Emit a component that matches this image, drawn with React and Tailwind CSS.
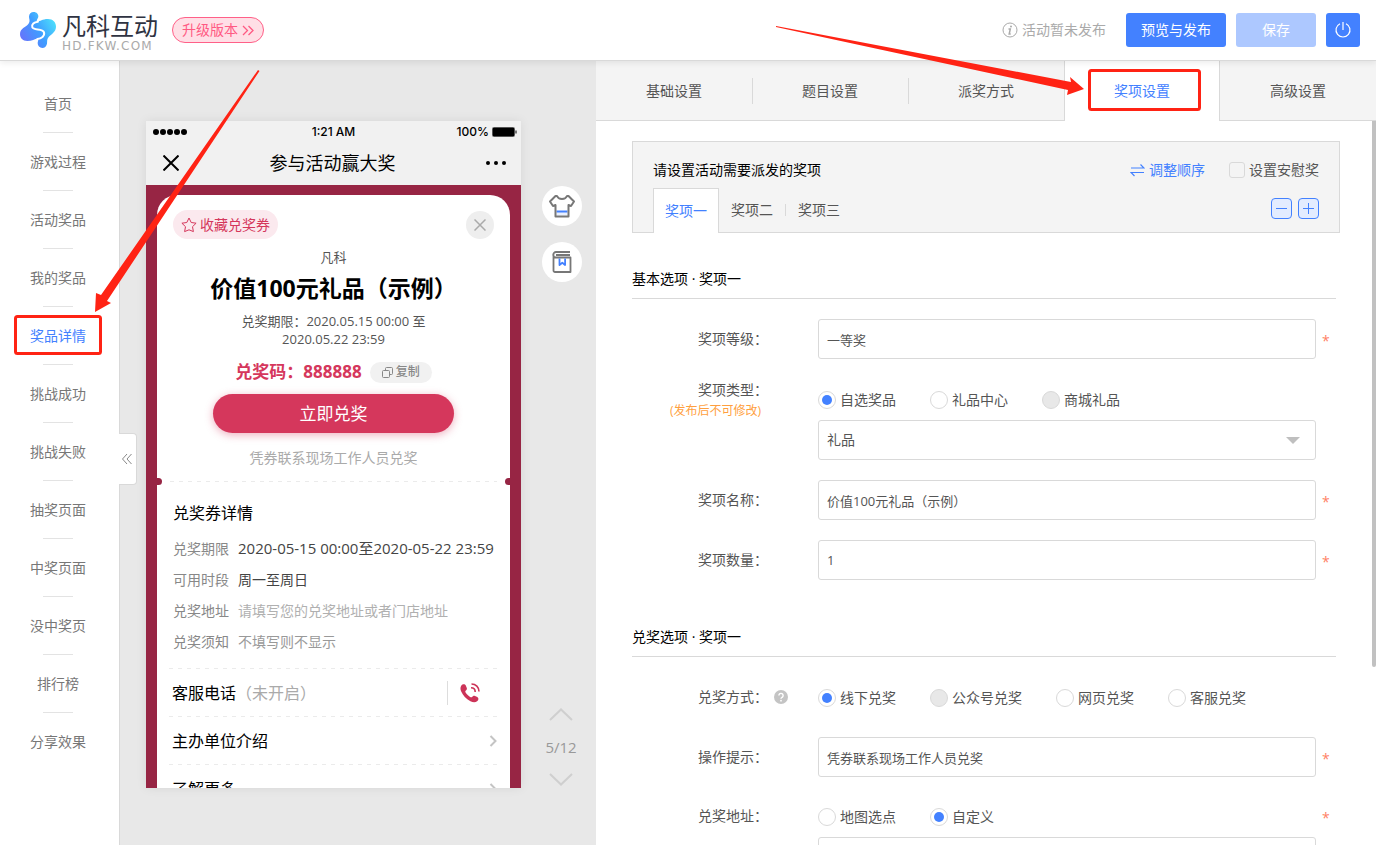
import { useState } from "react";

const pages = [
  "首页",
  "游戏过程",
  "活动奖品",
  "我的奖品",
  "奖品详情",
  "挑战成功",
  "挑战失败",
  "抽奖页面",
  "中奖页面",
  "没中奖页",
  "排行榜",
  "分享效果",
];

const tabs = ["基础设置", "题目设置", "派奖方式", "奖项设置", "高级设置"];

const couponRows = [
  { label: "兑奖期限", value: "2020-05-15 00:00至2020-05-22 23:59", style: "text-[15px] text-[#444444]" },
  { label: "可用时段", value: "周一至周日", style: "text-[#444444]" },
  { label: "兑奖地址", value: "请填写您的兑奖地址或者门店地址", style: "text-[#b0b0b0]" },
  { label: "兑奖须知", value: "不填写则不显示", style: "text-[#999999]" },
];

const inputClass =
  "block h-10 w-full appearance-none rounded-[3px] border border-[#d9d9d9] bg-white px-2 text-[#555555] outline-none focus:border-[#4381ff]";

function Logo() {
  return (
    <a href="#" aria-label="凡科互动" className="flex items-center gap-[6px]">
      <svg className="h-9 w-9" viewBox="0 0 108 108">
        <defs>
          <linearGradient id="logoFill" x1="0" y1="0.8" x2="1" y2="0.2">
            <stop offset="0" stopColor="#6b6ffb" />
            <stop offset="0.5" stopColor="#3f9dff" />
            <stop offset="1" stopColor="#4ee6fb" />
          </linearGradient>
        </defs>
        <path
          fill="url(#logoFill)"
          d="M41 0C50 0 56 7 55 14C54 19 50 22 50 28C60 30 64 21 84 21C99 21 108 31 108 44C108 60 94 66 86 75C80 82 82 88 81 95C79 103 74 108 67 108C59 108 53 102 53 94C53 88 56 85 54 80C44 80 36 87 22 87C8 87 0 78 0 66C0 48 20 46 27 33C31 25 27 20 27 14C27 6 33 0 41 0Z"
        />
        <path
          fill="none"
          stroke="#fff"
          strokeWidth="6"
          strokeLinecap="round"
          d="M54 29C42 30 34 37 37 46C40 56 68 49 72 61C75 72 64 80 52 81"
        />
      </svg>
      <span className="flex flex-col pt-1 text-[#2f3342]">
        <span className="text-2xl leading-7">凡科互动</span>
        <span className="font-['DejaVu_Sans'] text-xs leading-3 tracking-widest text-[#aaaaaa]">HD.FKW.COM</span>
      </span>
    </a>
  );
}

function Header() {
  return (
    <header className="relative z-10 flex h-[61px] shrink-0 items-center border-b border-[#d9d9d9] bg-white pr-4 pl-5 shadow-[0_2px_6px_rgba(0,0,0,0.08)]">
      <Logo />
      <button
        type="button"
        className="ml-[14px] flex h-[26px] items-center gap-1 rounded-full border border-[#ff6088] bg-[#ffdfe6] px-[9px] text-sm text-[#ff5a83]"
      >
        升级版本
        <svg className="h-[11px] w-3" viewBox="0 0 12 11" fill="none" stroke="currentColor" strokeWidth="1.300">
          <path d="M1 1l4.500 4.500L1 10M6.500 1l4.500 4.500L6.500 10" />
        </svg>
      </button>

      <div className="ml-auto flex items-center gap-[10px] text-sm">
        <span className="mr-[10px] flex items-center gap-1 text-[#aaaaaa]">
          <svg className="h-4 w-4" viewBox="0 0 16 16" fill="none" stroke="currentColor">
            <circle cx="8" cy="8" r="7" />
            <circle cx="9" cy="4.500" r="1" fill="currentColor" stroke="none" />
            <path strokeWidth="1.500" d="M6.500 7h1.800L7.200 12h1.500" />
          </svg>
          活动暂未发布
        </span>
        <button type="button" className="h-[34px] w-[100px] rounded-[3px] bg-[#4381ff] text-white">
          预览与发布
        </button>
        <button type="button" className="h-[34px] w-20 rounded-[3px] bg-[#adc8ff] text-white">
          保存
        </button>
        <button
          type="button"
          aria-label="退出"
          className="flex h-[34px] w-[34px] items-center justify-center rounded-[3px] bg-[#4381ff] text-white"
        >
          <svg className="h-[18px] w-[18px]" viewBox="0 0 18 18" fill="none" stroke="currentColor" strokeWidth="1.200">
            <path d="M9 1v8M6 2.700a7 7 0 1 0 6 0" />
          </svg>
        </button>
      </div>
    </header>
  );
}

function Sidebar({ page, onChange }) {
  return (
    <nav className="relative z-[5] w-[120px] shrink-0 border-r border-[#d9d9d9] bg-white pt-[14px]">
      <ul>
        {pages.map((name, i) => (
          <li key={name} className="flex flex-col items-center pr-[3px]">
            <button
              type="button"
              onClick={() => onChange(name)}
              className={`h-[57px] text-sm ${name === page ? "text-[#4381ff]" : "text-[#777777]"}`}
            >
              {name}
            </button>
            <span className={`h-px w-[30px] ${i < pages.length - 1 ? "bg-[#e3e3e3]" : "bg-transparent"}`} />
          </li>
        ))}
      </ul>
      <button
        type="button"
        aria-label="收起"
        className="absolute top-[372px] left-full flex h-[52px] w-[18px] items-center rounded-r-[4px] border border-l-0 border-[#d9d9d9] bg-white pl-[2px] text-[#888888]"
      >
        <svg className="h-3 w-3" viewBox="0 0 12 12" fill="none" stroke="currentColor">
          <path d="M6 1L1.500 6L6 11M10.500 1L6 6l4.500 5" />
        </svg>
      </button>
    </nav>
  );
}

function DashedLine() {
  return <div className="h-px flex-1 bg-[repeating-linear-gradient(90deg,#ebebeb_0_4px,transparent_4px_9px)]" />;
}

function ChevronRight() {
  return (
    <svg className="h-3 w-2" viewBox="0 0 8 12" fill="none" stroke="#c4c4c4" strokeWidth="2">
      <path d="M1.500 1l5 5l-5 5" />
    </svg>
  );
}

function Phone() {
  return (
    <div className="flex h-[667px] w-[375px] shrink-0 flex-col overflow-hidden bg-[#972544] shadow-[0_0_10px_rgba(0,0,0,0.08)]">
      <div className="shrink-0 bg-[#f1f1f1] text-black">
        {/* Status bar */}
        <div className="grid h-[21px] grid-cols-3 items-center px-1 font-['Inter'] text-xs font-medium">
          <svg className="ml-[3px] h-[6px] w-[34px]" viewBox="0 0 34 6">
            <circle cx="3" cy="3" r="3" />
            <circle cx="10" cy="3" r="3" />
            <circle cx="17" cy="3" r="3" />
            <circle cx="24" cy="3" r="3" />
            <circle cx="31" cy="3" r="3" />
          </svg>
          <span className="text-center">1:21 AM</span>
          <span className="flex items-center justify-end gap-[3px]">
            100%
            <svg className="h-[10px] w-[25px]" viewBox="0 0 25 10">
              <rect x="0.500" y="0.500" width="22" height="9" rx="1" fill="none" stroke="#555" />
              <rect x="1" y="1" width="21" height="8" />
              <path d="M23.500 3.500h1v3h-1z" />
            </svg>
          </span>
        </div>
        <div className="flex h-[43px] items-center justify-between pr-[15px] pb-px pl-[17px]">
          <svg className="h-4 w-4" viewBox="0 0 16 16" stroke="#000" strokeWidth="2">
            <path d="M0.500 0.500l15 15M15.500 0.500l-15 15" />
          </svg>
          <span className="text-lg">参与活动赢大奖</span>
          <svg className="h-1 w-5" viewBox="0 0 20 4">
            <circle cx="2" cy="2" r="2" />
            <circle cx="10" cy="2" r="2" />
            <circle cx="18" cy="2" r="2" />
          </svg>
        </div>
      </div>

      {/* Coupon */}
      <div className="mx-[11px] mt-[10px] flex shrink-0 flex-col items-center rounded-t-[20px] bg-white pt-[15px]">
        <div className="flex w-full items-center justify-between px-4">
          <button
            type="button"
            className="flex h-[29px] items-center gap-[3px] rounded-full bg-[#fbe9ee] px-2 text-sm text-[#d5375c]"
          >
            <svg className="h-4 w-4" viewBox="0 0 16 16" fill="none" stroke="currentColor" strokeLinejoin="round">
              <path d="M8 1l2.200 4.500l4.900.7l-3.600 3.500l.9 4.900L8 12.800L3.600 14.600l.9-4.900L.9 6.200l4.900-.7z" />
            </svg>
            收藏兑奖券
          </button>
          <button
            type="button"
            aria-label="关闭"
            className="flex h-7 w-7 items-center justify-center rounded-full bg-[#eeeeee]"
          >
            <svg className="h-3 w-3" viewBox="0 0 12 12" stroke="#aaa" strokeWidth="1.500">
              <path d="M0.500 0.500l11 11M11.500 0.500l-11 11" />
            </svg>
          </button>
        </div>

        <p className="mt-2 text-[13px] leading-5 text-[#555555]">凡科</p>
        <h1 className="mt-[5px] text-[23px] leading-8 font-bold text-black">价值100元礼品（示例）</h1>
        <p className="mt-2 text-center text-[13px] leading-[18px] text-[#555555]">
          兑奖期限：2020.05.15 00:00 至
          <br />
          2020.05.22 23:59
        </p>

        <div className="mt-[13px] flex h-[22px] items-center gap-2">
          <span className="text-[17px] font-bold text-[#d5375c]">兑奖码：888888</span>
          <button
            type="button"
            className="flex h-[21px] items-center gap-[3px] rounded-full bg-[#f1f1f1] px-3 text-xs font-medium text-[#888888]"
          >
            <svg className="h-[11px] w-[11px]" viewBox="0 0 11 11" fill="none" stroke="currentColor">
              <rect x="0.500" y="3.500" width="7" height="7" rx="1" />
              <path d="M3.500 3.500v-2a1 1 0 0 1 1-1h5a1 1 0 0 1 1 1v5a1 1 0 0 1-1 1h-2" />
            </svg>
            复制
          </button>
        </div>
        <button
          type="button"
          className="mt-[11px] h-[39px] w-[241px] rounded-full bg-[#d5375c] text-[17px] text-white shadow-[0_2px_8px_rgba(213,55,92,0.4)]"
        >
          立即兑奖
        </button>
        <p className="mt-[15px] text-sm leading-5 text-[#aaaaaa]">凭券联系现场工作人员兑奖</p>

        <div className="mt-[10px] flex w-full items-center">
          <span className="h-[7px] w-[5px] rounded-r-full bg-[#972544]" />
          <span className="w-2" />
          <DashedLine />
          <span className="w-2" />
          <span className="h-[7px] w-[5px] rounded-l-full bg-[#972544]" />
        </div>

        <div className="w-full px-4 pt-4">
          <h2 className="mb-2 text-base leading-6 text-black">兑奖券详情</h2>
          <dl>
            {couponRows.map((row) => (
              <div key={row.label} className="flex h-[31px] items-center gap-[9px] text-sm whitespace-nowrap">
                <dt className="text-[#888888]">{row.label}</dt>
                <dd className={row.style}>{row.value}</dd>
              </div>
            ))}
          </dl>
        </div>

        <div className="mt-[11px] w-full px-3 text-base text-black">
          <DashedLine />
          <div className="flex h-[47px] items-center justify-between pr-[18px] pl-[3px]">
            <span>
              客服电话<span className="text-[#aaaaaa]">（未开启）</span>
            </span>
            <a href="#" aria-label="拨打电话" className="flex h-6 items-center border-l border-[#dddddd] pl-3">
              <svg className="h-5 w-5" viewBox="0 0 20 20" fill="#cc3358">
                <path d="M1.200 2.700C2.700.8 5 .9 5.800 2.600l1 2.300c.5 1.400-.3 2-1.200 2.800c-.5.6-.3 1.200.2 2c1.100 1.700 2.600 3.200 4.300 4.200c.9.500 1.500.6 2 .1c.8-.9 1.500-1.700 2.900-1.100l2.300 1.100c1.600 1 1.500 3-.2 4.300c-1.700 1.300-4 1.300-6.700-.1C6 15.900 2.900 12.400 1.200 8.500C.3 6.300.2 4.300 1.200 2.700z" />
                <path d="M11.500 1c4.300 0 7.500 3.200 7.500 7.500M11 4.700c2.500 0 4.200 1.700 4.200 4.200" fill="none" stroke="#cc3358" strokeWidth="1.600" />
              </svg>
            </a>
          </div>
          <DashedLine />
          <div className="flex h-[47px] items-center justify-between pr-px pl-[3px]">
            主办单位介绍
            <ChevronRight />
          </div>
          <DashedLine />
          <div className="flex h-[47px] items-center justify-between pr-px pl-[3px]">
            了解更多
            <ChevronRight />
          </div>
        </div>
      </div>
    </div>
  );
}

function Preview() {
  return (
    <section className="flex w-[476px] shrink-0 gap-[21px] bg-[#e8e8e8] pt-[60px] pl-[26px]">
      <Phone />
      <div className="flex h-[667px] w-10 flex-col items-center gap-4 pt-[65px]">
        <button type="button" aria-label="皮肤" className="flex h-10 w-10 items-center justify-center rounded-full bg-white">
          <svg className="h-6 w-7" viewBox="0 0 28 24" fill="none" stroke="#777" strokeWidth="2" strokeLinejoin="round">
            <path d="M8.500 18h11v3.500h-11z" fill="#e9f0ff" stroke="none" />
            <path d="M8.500 17.500h11" stroke="#4381ff" />
            <path d="M9 2L7.500 2L2 7.500l3 4.500l2.500-1V22.500h13V11l2.500 1l3-4.500L20.500 2H19c-.8 2-2.500 3-5 3s-4.200-1-5-3z" />
          </svg>
        </button>
        <button type="button" aria-label="模板" className="flex h-10 w-10 items-center justify-center rounded-full bg-white">
          <svg className="h-6 w-5" viewBox="0 0 20 24" fill="none" stroke="#777" strokeWidth="1.800" strokeLinejoin="round">
            <path d="M18 2H4a2.500 2.500 0 0 0 0 5.500h14.500V22H3a1.500 1.500 0 0 1-1.500-1.500V4.500M4 5h14" />
            <path d="M7.500 8.500v6.500l2.800-2.300l2.800 2.300v-6.500" stroke="#4381ff" />
          </svg>
        </button>
        <div className="mt-auto flex flex-col items-center gap-4 pr-[2px] pb-[2px] text-[15px] text-[#999999]">
          <button type="button" aria-label="上一页">
            <svg className="h-[13px] w-6" viewBox="0 0 24 13" fill="none" stroke="#cfcfcf" strokeWidth="2">
              <path d="M1 12L12 1.500L23 12" />
            </svg>
          </button>
          <span className="leading-5">5/12</span>
          <button type="button" aria-label="下一页">
            <svg className="h-[13px] w-6" viewBox="0 0 24 13" fill="none" stroke="#cfcfcf" strokeWidth="2">
              <path d="M1 1l11 10.500L23 1" />
            </svg>
          </button>
        </div>
      </div>
    </section>
  );
}

function Field({ label, htmlFor, note, help, required, children }) {
  return (
    <div className="flex items-start">
      <div className={`w-[136px] shrink-0 text-right text-sm ${note ? "leading-[22px]" : "leading-10"}`}>
        <label htmlFor={htmlFor}>{label}：</label>
        {note && <p className="pr-[7px] text-xs leading-5 text-[#ff9f3e]">({note})</p>}
      </div>
      <div className="flex h-10 w-[50px] shrink-0 items-center pl-[6px]">
        {help && (
          <svg className="h-[14px] w-[14px]" viewBox="0 0 14 14" fill="none">
            <circle cx="7" cy="7" r="7" fill="#c4c4c4" />
            <path d="M4.900 5.500a2.100 2.100 0 1 1 3.200 1.800c-.7.500-1.100.8-1.100 1.500" stroke="#fff" strokeWidth="1.400" />
            <circle cx="7" cy="10.700" r="0.900" fill="#fff" />
          </svg>
        )}
      </div>
      <div className="min-w-0 flex-1">{children}</div>
      <span className="h-10 w-5 shrink-0 pl-[6px] text-sm leading-[44px] text-[#ff7f66]">{required && "*"}</span>
    </div>
  );
}

function RadioGroup({ name, options, value, onChange }) {
  return (
    <div role="radiogroup" className="flex h-[41px] items-center gap-[34px]">
      {options.map((option) => (
        <label key={option.label} className="flex items-center gap-1 text-sm whitespace-nowrap">
          <input
            type="radio"
            name={name}
            checked={option.label === value}
            disabled={option.disabled}
            onChange={() => onChange(option.label)}
            className="h-[18px] w-[18px] appearance-none rounded-full border border-[#d9d9d9] bg-white bg-clip-content p-[3px] checked:bg-[#4381ff] disabled:bg-[#e8e8e8] disabled:bg-clip-border"
          />
          {option.label}
        </label>
      ))}
    </div>
  );
}

function PrizeBox() {
  return (
    <div className="border border-b-0 border-[#d9d9d9] bg-[#f4f4f4] text-[#555555]">
      <div className="flex h-[46px] items-center px-5 pt-[10px] text-sm">
        <span className="text-black">请设置活动需要派发的奖项</span>
        <button type="button" className="ml-auto flex items-center gap-1 text-[#4381ff]">
          <svg className="h-[14px] w-[15px]" viewBox="0 0 15 14" fill="none" stroke="currentColor" strokeWidth="1.200">
            <path d="M1 5h13L10.500 1.500M14 9.500H1L4.500 13" />
          </svg>
          调整顺序
        </button>
        <label className="ml-6 flex items-center gap-1">
          <input type="checkbox" className="h-4 w-4 appearance-none rounded-[3px] border border-[#d9d9d9] checked:bg-[#4381ff]" />
          设置安慰奖
        </label>
      </div>
      <div className="flex h-[45px] items-center border-b border-[#d9d9d9] px-5 text-sm">
        <button
          type="button"
          className="-mb-px h-[45px] border border-b-0 border-[#d9d9d9] bg-white px-[11px] text-[#4381ff]"
        >
          奖项一
        </button>
        <button type="button" className="px-3">
          奖项二
        </button>
        <span className="h-3 w-px bg-[#d9d9d9]" />
        <button type="button" className="px-3">
          奖项三
        </button>
        <div className="ml-auto flex gap-[6px] pb-1">
          <button
            type="button"
            aria-label="删除奖项"
            className="flex h-[21px] w-[21px] items-center justify-center rounded-[4px] border border-[#4381ff] bg-[#e3ecff]"
          >
            <svg className="h-[11px] w-[11px]" viewBox="0 0 11 11" stroke="#4381ff">
              <path d="M0 5.500h11" />
            </svg>
          </button>
          <button
            type="button"
            aria-label="添加奖项"
            className="flex h-[21px] w-[21px] items-center justify-center rounded-[4px] border border-[#4381ff] bg-[#e3ecff]"
          >
            <svg className="h-[11px] w-[11px]" viewBox="0 0 11 11" stroke="#4381ff">
              <path d="M0 5.500h11M5.500 0v11" />
            </svg>
          </button>
        </div>
      </div>
    </div>
  );
}

function PrizeForm() {
  const [prizeType, setPrizeType] = useState("自选奖品");
  const [cashMethod, setCashMethod] = useState("线下兑奖");
  const [addressType, setAddressType] = useState("自定义");

  return (
    <form className="mr-1 text-[#555555]">
      <h3 className="mt-9 border-b border-[#d9d9d9] pb-[9px] text-sm text-black">基本选项 · 奖项一</h3>
      <div className="mt-5 flex flex-col gap-5">
        <Field label="奖项等级" htmlFor="level" required>
          <input id="level" type="text" defaultValue="一等奖" className={`${inputClass} text-[13px]`} />
        </Field>
        <Field label="奖项类型" htmlFor="kind" note="发布后不可修改">
          <RadioGroup
            name="prizeType"
            value={prizeType}
            onChange={setPrizeType}
            options={[{ label: "自选奖品" }, { label: "礼品中心" }, { label: "商城礼品", disabled: true }]}
          />
          <div className="relative">
            <select id="kind" className={`${inputClass} text-sm`}>
              <option>礼品</option>
            </select>
            <svg className="pointer-events-none absolute top-[17px] right-4 h-[7px] w-[14px]" viewBox="0 0 14 7" fill="#bfbfbf">
              <path d="M0 0h14L7 7z" />
            </svg>
          </div>
        </Field>
        <Field label="奖项名称" htmlFor="name" required>
          <input id="name" type="text" defaultValue="价值100元礼品（示例）" className={`${inputClass} text-[13px]`} />
        </Field>
        <Field label="奖项数量" htmlFor="count" required>
          <input id="count" type="text" defaultValue="1" className={`${inputClass} text-[13px]`} />
        </Field>
      </div>

      <h3 className="mt-[47px] border-b border-[#d9d9d9] pb-[9px] text-sm text-black">兑奖选项 · 奖项一</h3>
      <div className="mt-5 flex flex-col gap-[19px]">
        <Field label="兑奖方式" help>
          <RadioGroup
            name="cashMethod"
            value={cashMethod}
            onChange={setCashMethod}
            options={[
              { label: "线下兑奖" },
              { label: "公众号兑奖", disabled: true },
              { label: "网页兑奖" },
              { label: "客服兑奖" },
            ]}
          />
        </Field>
        <Field label="操作提示" htmlFor="tip" required>
          <input id="tip" type="text" defaultValue="凭券联系现场工作人员兑奖" className={`${inputClass} text-[13px]`} />
        </Field>
        <Field label="兑奖地址" htmlFor="address" required>
          <RadioGroup
            name="addressType"
            value={addressType}
            onChange={setAddressType}
            options={[{ label: "地图选点" }, { label: "自定义" }]}
          />
          <input id="address" type="text" className={`${inputClass} text-[13px]`} />
        </Field>
      </div>
    </form>
  );
}

function Settings() {
  const [tab, setTab] = useState("奖项设置");

  return (
    <section className="relative flex min-w-0 flex-1 flex-col overflow-hidden bg-white">
      <div role="tablist" className="grid h-[60px] shrink-0 grid-cols-5 bg-[#f4f4f4] text-sm">
        {tabs.map((name, i) => {
          const active = name === tab;
          return (
            <button
              key={name}
              type="button"
              role="tab"
              aria-selected={active}
              onClick={() => setTab(name)}
              className={`flex items-center ${
                active
                  ? "border-x border-[#d9d9d9] bg-white text-[#4381ff]"
                  : "border-b border-[#d9d9d9] text-[#555555]"
              }`}
            >
              <span className="flex-1">{name}</span>
              {i < 2 && <span className="-mr-px h-[26px] w-px bg-[#d9d9d9]" />}
            </button>
          );
        })}
      </div>
      <div className="min-h-0 flex-1 overflow-hidden px-9 pt-5">
        <PrizeBox />
        <PrizeForm />
      </div>
      <div className="absolute top-[60px] right-0 h-[546px] w-1 rounded-b-full bg-[#c1c1c1]" />
    </section>
  );
}

// Red arrows and frames of the tutorial, drawn over the editor
function Marks() {
  return (
    <svg className="pointer-events-none absolute top-0 left-0 z-20 h-[400px] w-[1376px]" viewBox="0 0 1376 400" fill="#ff2314">
      <rect x="15.500" y="316.500" width="85" height="37" rx="2" fill="none" stroke="#ff2314" strokeWidth="3" />
      <path d="M258 70L101 295L96 293L95 312L111 303L107 301L259.500 71z" />
      <rect x="1089.500" y="70.500" width="110" height="39" rx="2" fill="none" stroke="#ff2314" strokeWidth="3" />
      <path d="M776 26L1071 82L1070 77L1084 89L1067 95L1068 90L776 27z" />
    </svg>
  );
}

export default function App() {
  const [page, setPage] = useState("奖品详情");

  return (
    <div
      lang="zh-CN"
      className="relative flex h-screen flex-col overflow-hidden bg-white font-['Open_Sans','Noto_Sans_CJK_SC',sans-serif]"
    >
      <Header />
      <main className="flex min-h-0 flex-1">
        <Sidebar page={page} onChange={setPage} />
        <Preview />
        <Settings />
      </main>
      <Marks />
    </div>
  );
}
